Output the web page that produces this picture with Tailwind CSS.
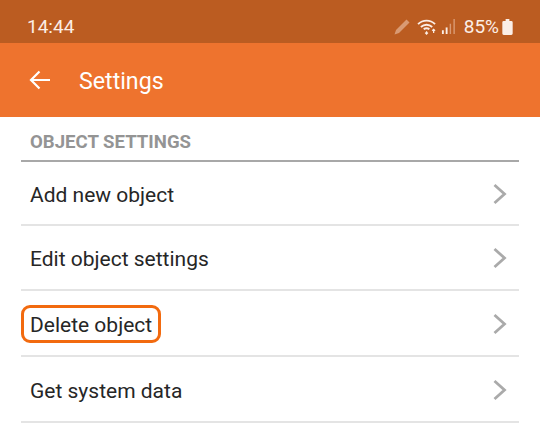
<!DOCTYPE html>
<html lang="en">
<head>
    <meta charset="UTF-8">
    <title>Settings</title>
    <script src="https://cdn.jsdelivr.net/npm/@tailwindcss/browser@4"></script>
</head>
<body class="w-[540px] h-[434px] overflow-hidden bg-white font-['Roboto',sans-serif]">
    <!-- status bar -->
    <div class="h-[43px] bg-[#bb5c21] flex items-center justify-between pt-[10px] pl-[27px] pr-[27px] text-[#fbeee6]">
        <span class="text-[19px] leading-none">14:44</span>
        <div class="flex items-center">
            <svg class="w-[16px] h-[16px] mr-[6px]" viewBox="0 0 16 16" fill="#d99a73"><path d="M12.500 .5l3 3L5 14l-4.500 1.500L2 11z"/></svg>
            <svg class="w-[23px] h-[17px]" viewBox="0 0 22 18" fill="none" stroke="#fbeee6" stroke-width="2"><path d="M1 6.500C6 1.500 14 1.500 19 6.500"/><path d="M4 9.500c3.500-3.200 8.500-3.200 12 0"/><path d="M7 12c2-1.600 4-1.600 6 0"/><path d="M10 14v3M8.500 15.500l1.500 1.500 1.500-1.500" stroke-width="1.300"/><path d="M17.500 16v-4M16 13.500l1.500-1.500 1.500 1.500" stroke-width="1.300"/></svg>
            <svg class="w-[15px] h-[17px] ml-[2px]" viewBox="0 0 16 18" fill="none"><path d="M2 13v4" stroke="#fbeee6" stroke-width="2"/><path d="M6 10v7" stroke="#fbeee6" stroke-width="2"/><path d="M10 6v11M14 1v16" stroke="#d99a73" stroke-width="1.500"/></svg>
            <span class="text-[19px] leading-none ml-[8px]">85%</span>
            <svg class="w-[11px] h-[16px] ml-[3px]" viewBox="0 0 11 17" fill="#fbeee6"><path d="M3.500 0h4v2h2a1.500 1.500 0 0 1 1.500 1.500V15.500A1.500 1.500 0 0 1 9.500 17h-8A1.500 1.500 0 0 1 0 15.500V3.500A1.500 1.500 0 0 1 1.500 2h2z"/></svg>
        </div>
    </div>

    <!-- toolbar -->
    <header class="h-[74px] bg-[#ee732e] flex items-center pl-[29px] text-white">
        <svg class="w-[22px] h-[20px]" viewBox="0 0 22 20" fill="none" stroke="white" stroke-width="2.200"><path d="M21 10H2M10.500 1.500L2 10l8.500 8.500"/></svg>
        <h1 class="ml-[28px] pt-[3px] text-[23.200px] leading-none">Settings</h1>
    </header>

    <main class="px-[21px]">
        <h2 class="h-[45px] pt-[15px] pl-[9px] text-[18.600px] leading-[20px] font-bold text-[#949494] border-b-2 border-[#a8a8a8]">OBJECT SETTINGS</h2>

        <div class="h-[64px] flex items-center justify-between pl-[9px] pr-[11px] border-b-2 border-[#e4e4e4]">
            <span class="pt-[5px] text-[21px] text-[#262626]">Add new object</span>
            <svg class="w-[16px] h-[22px] mt-[1px]" viewBox="0 0 16 22" fill="none" stroke="#aaaaaa" stroke-width="2.800"><path d="M2.500 2l10 9-10 9"/></svg>
        </div>
        <div class="h-[65px] flex items-center justify-between pl-[9px] pr-[11px] border-b-2 border-[#e4e4e4]">
            <span class="pt-[5px] text-[21px] text-[#262626]">Edit object settings</span>
            <svg class="w-[16px] h-[22px] mt-[1px]" viewBox="0 0 16 22" fill="none" stroke="#aaaaaa" stroke-width="2.800"><path d="M2.500 2l10 9-10 9"/></svg>
        </div>
        <div class="h-[66px] flex items-center justify-between pr-[11px] border-b-2 border-[#e4e4e4]">
            <span class="h-[38px] mt-[1px] flex items-center pt-[5px] px-[6px] text-[21px] text-[#262626] border-[3px] border-[#f26a0f] rounded-[9px]">Delete object</span>
            <svg class="w-[16px] h-[22px] mt-[1px]" viewBox="0 0 16 22" fill="none" stroke="#aaaaaa" stroke-width="2.800"><path d="M2.500 2l10 9-10 9"/></svg>
        </div>
        <div class="h-[66px] flex items-center justify-between pl-[9px] pr-[11px] border-b-2 border-[#e4e4e4]">
            <span class="pt-[5px] text-[21px] text-[#262626]">Get system data</span>
            <svg class="w-[16px] h-[22px] mt-[1px]" viewBox="0 0 16 22" fill="none" stroke="#aaaaaa" stroke-width="2.800"><path d="M2.500 2l10 9-10 9"/></svg>
        </div>
    </main>
</body>
</html>
